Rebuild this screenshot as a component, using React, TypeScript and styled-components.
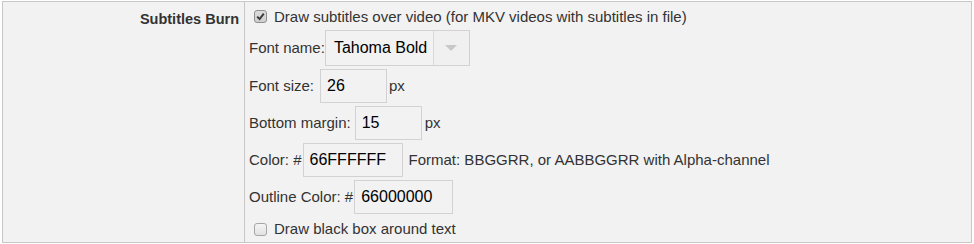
import React, { FC } from "react"
import styled, { createGlobalStyle } from "styled-components"

const GlobalStyle = createGlobalStyle`
    html, body {
        margin: 0;
        padding: 0;
        background: #ffffff;
    }
    body {
        font-family: "Liberation Sans", Arial, sans-serif;
        font-size: 15px;
        color: #333333;
    }
`

const Page = styled.div`
    padding: 1px 2px 1px 2px;
`

const SettingsTable = styled.div`
    display: grid;
    grid-template-columns: 242px 1fr;
    border: 1px solid #c8c8c8;
    background: #f2f2f2;
    height: 240px;
`

const LabelCell = styled.div`
    border-right: 1px solid #c8c8c8;
    text-align: right;
    font-weight: bold;
    font-size: 14.5px;
    line-height: 16px;
    padding: 9px 5px 0 0;
    color: #333333;
`

const ValueCell = styled.div`
    display: flex;
    flex-direction: column;
    gap: 3px;
    padding: 4px 0 0 4px;
`

const Row = styled.div<{ $height?: number }>`
    display: flex;
    align-items: center;
    height: ${(p) => (p.$height ? `${p.$height}px` : "auto")};
    line-height: 16px;
    white-space: nowrap;
`

const Box = styled.span<{ $checked?: boolean }>`
    display: inline-flex;
    align-items: center;
    justify-content: center;
    box-sizing: border-box;
    width: 13px;
    height: 13px;
    margin: 0 7px 0 5px;
    border: 1px solid ${(p) => (p.$checked ? "#8f8f8f" : "#a6a6a6")};
    border-radius: 3px;
    background: ${(p) => (p.$checked ? "linear-gradient(#dcdcdc, #cfcfcf)" : "linear-gradient(#f4f4f4, #e2e2e2)")};
`

const Field = styled.span<{ $width: number; $gap: number }>`
    display: inline-flex;
    align-items: center;
    box-sizing: border-box;
    width: ${(p) => p.$width}px;
    height: 34px;
    margin-left: ${(p) => p.$gap}px;
    padding-left: 6px;
    border: 1px solid #d2d2d2;
    background: #f2f2f2;
    color: #000000;
    font-size: 16px;
`

const Select = styled.span<{ $gap: number }>`
    display: inline-flex;
    box-sizing: border-box;
    width: 145px;
    height: 36px;
    margin-left: ${(p) => p.$gap}px;
    border: 1px solid #d2d2d2;
    background: #f2f2f2;
`

const SelectValue = styled.span`
    display: flex;
    align-items: center;
    width: 108px;
    padding-left: 8px;
    box-sizing: border-box;
    border-right: 1px solid #d8d8d8;
    color: #000000;
    font-size: 16px;
`

const SelectArrow = styled.span`
    flex: 1;
    display: flex;
    align-items: center;
    justify-content: center;
    background: #f0f0f0;
`

const Unit = styled.span<{ $gap: number }>`
    margin-left: ${(p) => p.$gap}px;
`

const Checkbox: FC<{ checked?: boolean }> = ({ checked }) => (
    <Box $checked={checked}>
        {checked && (
            <svg width="9" height="9" viewBox="0 0 9 9">
                <path d="M1.2 4.6 L3.6 7 L7.8 1.6" fill="none" stroke="#3a3a3a" strokeWidth="1.9" />
            </svg>
        )}
    </Box>
)

export default function App() {
    return (
        <Page>
            <GlobalStyle />
            <SettingsTable>
                <LabelCell>Subtitles Burn</LabelCell>
                <ValueCell>
                    <Row $height={21}>
                        <Checkbox checked />
                        Draw subtitles over video (for MKV videos with subtitles in file)
                    </Row>
                    <Row>
                        Font name:
                        <Select $gap={0}>
                            <SelectValue>Tahoma Bold</SelectValue>
                            <SelectArrow>
                                <svg width="12" height="6" viewBox="0 0 12 6">
                                    <path d="M0 0 H12 L6 6 Z" fill="#c8c8c8" />
                                </svg>
                            </SelectArrow>
                        </Select>
                    </Row>
                    <Row>
                        Font size:
                        <Field $width={67} $gap={6}>26</Field>
                        <Unit $gap={2}>px</Unit>
                    </Row>
                    <Row>
                        Bottom margin:
                        <Field $width={67} $gap={4}>15</Field>
                        <Unit $gap={3}>px</Unit>
                    </Row>
                    <Row>
                        Color: #
                        <Field $width={100} $gap={1}>66FFFFFF</Field>
                        <Unit $gap={6}>Format: BBGGRR, or AABBGGRR with Alpha-channel</Unit>
                    </Row>
                    <Row>
                        Outline Color: #
                        <Field $width={99} $gap={1}>66000000</Field>
                    </Row>
                    <Row $height={24}>
                        <Checkbox />
                        Draw black box around text
                    </Row>
                </ValueCell>
            </SettingsTable>
        </Page>
    )
}
